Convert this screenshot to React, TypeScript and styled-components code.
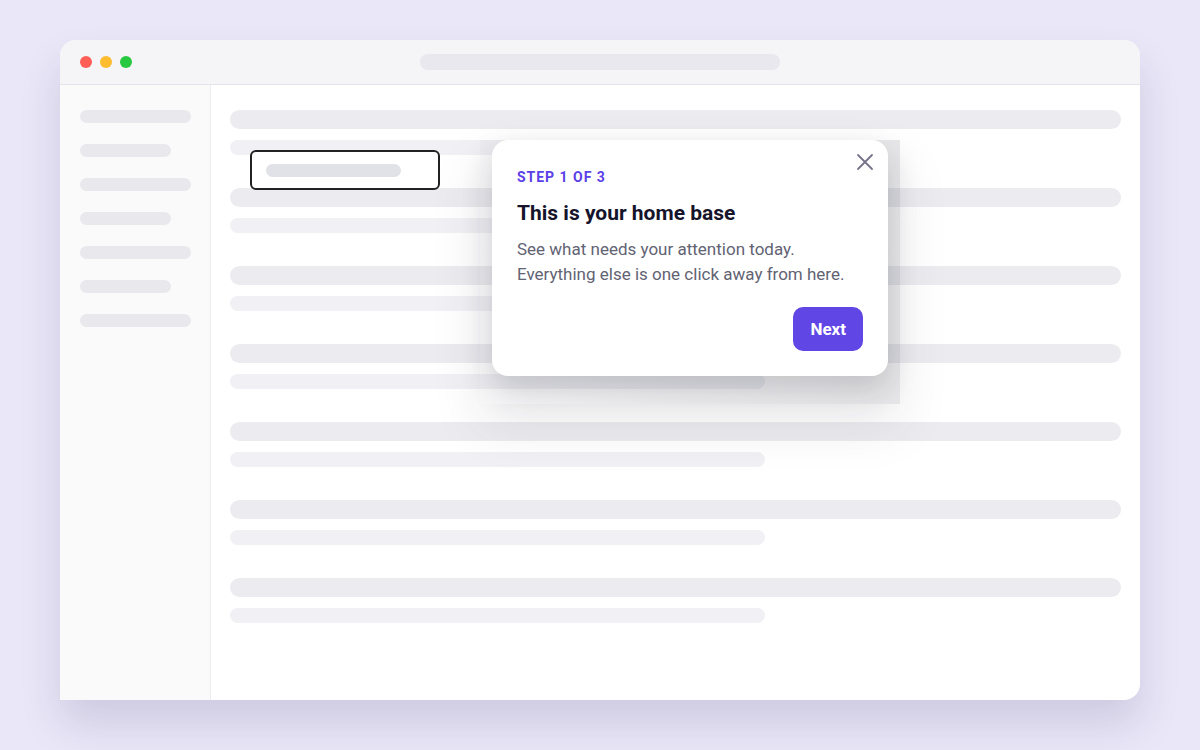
import React from "react"
import styled, { createGlobalStyle } from "styled-components"

const GlobalStyle = createGlobalStyle`
  html, body {
    margin: 0;
    padding: 0;
    background: #eae7f8;
    font-family: Roboto, "Liberation Sans", Arial, sans-serif;
  }
  * {
    box-sizing: border-box;
  }
`

const SIDEBAR_WIDTHS = [111, 91, 111, 91, 111, 91, 111]
const ROW_COUNT = 7

const App: React.FC = () => {
  return (
    <>
      <GlobalStyle />
      <Stage>
        <Window>
          <TitleBar>
            <Dots>
              <Dot $color="#ff5f57" />
              <Dot $color="#febc2e" />
              <Dot $color="#28c840" />
            </Dots>
            <UrlBar />
          </TitleBar>
          <Body>
            <Sidebar>
              {SIDEBAR_WIDTHS.map((w, i) => (
                <NavItem key={i} $width={w} />
              ))}
            </Sidebar>
            <Main>
              {Array.from({ length: ROW_COUNT }).map((_, i) => (
                <RowGroup key={i}>
                  <LineWide />
                  <LineShort />
                </RowGroup>
              ))}
            </Main>
          </Body>

          <Spotlight>
            <SpotlightBar />
          </Spotlight>

          <PopoverLayer>
            <Card role="dialog" aria-label="Onboarding step">
              <CloseButton aria-label="Close">
                <svg width="24" height="24" viewBox="0 0 24 24" fill="none">
                  <path
                    d="M5 5L19 19M19 5L5 19"
                    stroke="#757389"
                    strokeWidth="1.8"
                    strokeLinecap="round"
                  />
                </svg>
              </CloseButton>
              <StepLabel>Step 1 of 3</StepLabel>
              <Title>This is your home base</Title>
              <Description>
                See what needs your attention today.
                <br />
                Everything else is one click away from here.
              </Description>
              <Footer>
                <NextButton>Next</NextButton>
              </Footer>
            </Card>
          </PopoverLayer>
        </Window>
      </Stage>
    </>
  )
}

const Stage = styled.div`
  width: 1200px;
  height: 750px;
  padding: 40px 60px 50px;
  display: flex;
`

const Window = styled.div`
  position: relative;
  flex: 1;
  display: flex;
  flex-direction: column;
  background: #ffffff;
  border-radius: 16px;
  box-shadow: 0 24px 40px rgba(50, 40, 100, 0.15);
`

const TitleBar = styled.div`
  height: 45px;
  flex-shrink: 0;
  display: grid;
  grid-template-columns: 1fr auto 1fr;
  align-items: center;
  padding: 0 20px;
  background: #f5f5f7;
  border-bottom: 1px solid #e4e4ea;
  border-radius: 16px 16px 0 0;
`

const Dots = styled.div`
  display: flex;
  gap: 8px;
`

const Dot = styled.span<{ $color: string }>`
  width: 12px;
  height: 12px;
  border-radius: 50%;
  background: ${({ $color }) => $color};
`

const UrlBar = styled.div`
  width: 360px;
  height: 16px;
  border-radius: 8px;
  background: #e8e8ee;
`

const Body = styled.div`
  flex: 1;
  display: flex;
`

const Sidebar = styled.aside`
  width: 151px;
  flex-shrink: 0;
  display: flex;
  flex-direction: column;
  gap: 21px;
  padding: 25px 20px 0;
  background: #fafafa;
  border-right: 1px solid #ececef;
`

const NavItem = styled.div<{ $width: number }>`
  width: ${({ $width }) => $width}px;
  height: 13px;
  border-radius: 7px;
  background: #e8e8ed;
`

const Main = styled.main`
  flex: 1;
  display: flex;
  flex-direction: column;
  gap: 33px;
  padding: 25px 19px 0;
`

const RowGroup = styled.div`
  display: flex;
  flex-direction: column;
  gap: 11px;
`

const LineWide = styled.div`
  height: 19px;
  border-radius: 10px;
  background: #ececf0;
`

const LineShort = styled.div`
  width: 60%;
  height: 15px;
  border-radius: 8px;
  background: #f1f1f5;
`

const Spotlight = styled.div`
  position: absolute;
  left: 190px;
  top: 110px;
  width: 190px;
  height: 40px;
  display: flex;
  align-items: center;
  padding: 0 14px;
  background: #ffffff;
  border: 2px solid #222222;
  border-radius: 6px;
`

const SpotlightBar = styled.div`
  width: 135px;
  height: 13px;
  border-radius: 7px;
  background: #e1e2e7;
`

const PopoverLayer = styled.div`
  position: absolute;
  left: 420px;
  top: 100px;
  width: 420px;
  height: 264px;
  padding: 0 12px;
  background: linear-gradient(
    90deg,
    rgba(30, 30, 50, 0.03) 0%,
    rgba(30, 30, 50, 0.07) 40%,
    rgba(30, 30, 50, 0.11) 100%
  );
  box-shadow: 0 22px 50px rgba(30, 30, 50, 0.09);
`

const Card = styled.div`
  position: relative;
  display: flex;
  flex-direction: column;
  padding: 29px 25px 25px;
  background: #ffffff;
  border-radius: 16px;
  box-shadow: 0 14px 30px rgba(20, 20, 40, 0.18);
`

const CloseButton = styled.button`
  position: absolute;
  top: 10px;
  right: 11px;
  width: 24px;
  height: 24px;
  padding: 0;
  border: none;
  background: transparent;
  display: flex;
  cursor: pointer;
`

const StepLabel = styled.div`
  font-size: 14px;
  line-height: 16px;
  font-weight: 700;
  letter-spacing: 0.07em;
  text-transform: uppercase;
  color: #5b3fe8;
`

const Title = styled.h2`
  margin: 15px 0 0;
  font-size: 21px;
  line-height: 26px;
  font-weight: 700;
  color: #16142b;
`

const Description = styled.p`
  margin: 11px 0 0;
  font-size: 17px;
  line-height: 25px;
  color: #626373;
`

const Footer = styled.div`
  display: flex;
  justify-content: flex-end;
  margin-top: 20px;
`

const NextButton = styled.button`
  height: 44px;
  padding: 0 17px;
  border: none;
  border-radius: 10px;
  background: #6146e6;
  color: #ffffff;
  font-family: Roboto, "Liberation Sans", Arial, sans-serif;
  font-size: 17px;
  font-weight: 700;
  cursor: pointer;
`

export default App
